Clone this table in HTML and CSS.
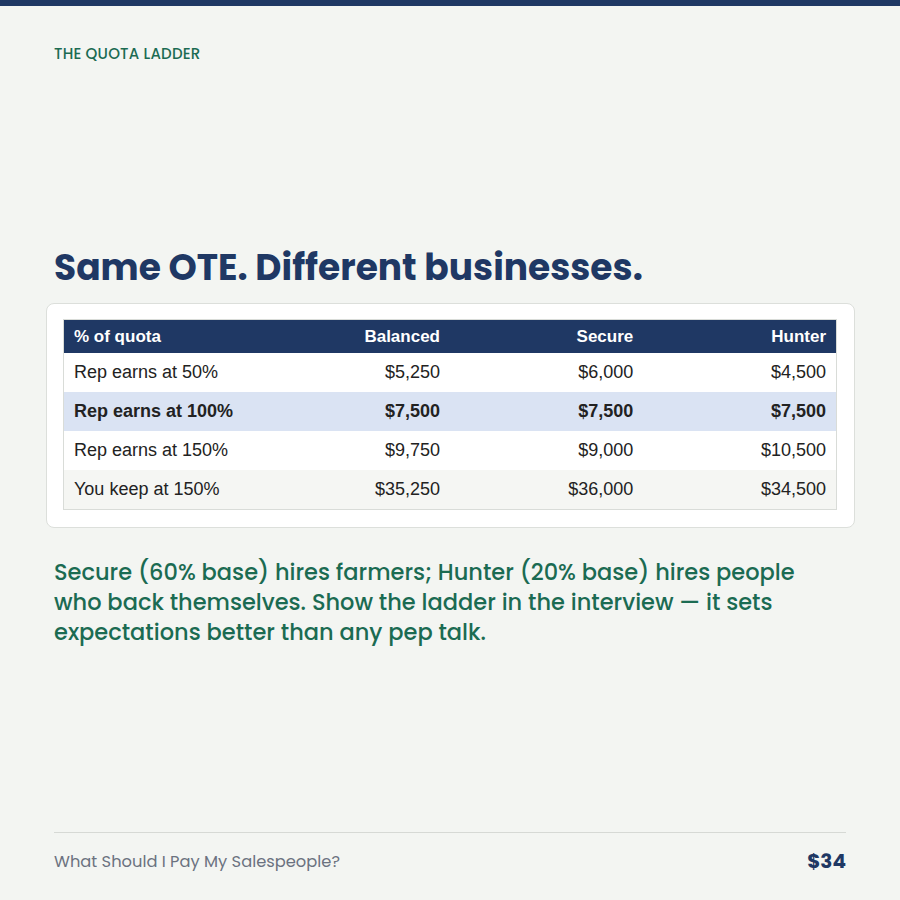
FILE: index.html
```html
<!DOCTYPE html>
<html lang="en">
<head>
    <meta charset="UTF-8">
    <title>The Quota Ladder</title>
    <link rel="stylesheet" href="styles.css">
</head>
<body>
    <div class="topbar"></div>
    <div class="page">
        <div class="eyebrow">The Quota Ladder</div>

        <div class="main">
            <h1>Same OTE. Different businesses.</h1>

            <div class="card">
                <table class="ladder">
                    <thead>
                        <tr>
                            <th>% of quota</th>
                            <th>Balanced</th>
                            <th>Secure</th>
                            <th>Hunter</th>
                        </tr>
                    </thead>
                    <tbody>
                        <tr>
                            <td>Rep earns at 50%</td>
                            <td>$5,250</td>
                            <td>$6,000</td>
                            <td>$4,500</td>
                        </tr>
                        <tr class="target">
                            <td>Rep earns at 100%</td>
                            <td>$7,500</td>
                            <td>$7,500</td>
                            <td>$7,500</td>
                        </tr>
                        <tr>
                            <td>Rep earns at 150%</td>
                            <td>$9,750</td>
                            <td>$9,000</td>
                            <td>$10,500</td>
                        </tr>
                        <tr class="keep">
                            <td>You keep at 150%</td>
                            <td>$35,250</td>
                            <td>$36,000</td>
                            <td>$34,500</td>
                        </tr>
                    </tbody>
                </table>
            </div>

            <p class="takeaway">Secure (60% base) hires farmers; Hunter (20% base) hires people who back themselves. Show the ladder in the interview — it sets expectations better than any pep talk.</p>
        </div>

        <div class="footer">
            <span class="book">What Should I Pay My Salespeople?</span>
            <span class="price">$34</span>
        </div>
    </div>
</body>
</html>
```

FILE: styles.css
```css
html, body {
    margin: 0;
    padding: 0;
}
body {
    background-color: #f3f5f2;
    font-family: "Poppins", "Lato", "Noto Sans", sans-serif;
    width: 900px;
    height: 900px;
    overflow: hidden;
}
.topbar {
    height: 6px;
    background-color: #1f3864;
}
.page {
    box-sizing: border-box;
    height: 894px;
    padding: 38px 54px 0 54px;
    display: flex;
    flex-direction: column;
}
.eyebrow {
    color: #1b6b52;
    font-size: 15px;
    font-weight: 500;
    letter-spacing: 0.2px;
    text-transform: uppercase;
    line-height: 20px;
}
.main {
    flex: 1;
    display: flex;
    flex-direction: column;
    justify-content: center;
    padding-bottom: 3px;
}
h1 {
    margin: 0 0 13px 0;
    color: #1f3864;
    font-size: 36px;
    font-weight: 700;
    line-height: 44px;
}
.card {
    background-color: #fff;
    border: 1px solid #dcdfdb;
    border-radius: 8px;
    margin: 0 -9px 0 -8px;
    padding: 15px 17px 17px 16px;
}
.ladder {
    width: 100%;
    table-layout: fixed;
    border-collapse: collapse;
    border: 1px solid #d9dcd8;
    font-family: "Liberation Sans", Arial, sans-serif;
    font-size: 18px;
    color: #222;
}
.ladder th,
.ladder td {
    padding: 0 10px;
    text-align: right;
    white-space: nowrap;
}
.ladder th:first-child,
.ladder td:first-child {
    text-align: left;
}
.ladder th {
    background-color: #1f3864;
    color: #fff;
    font-size: 17px;
    font-weight: 700;
    height: 33px;
}
.ladder td {
    height: 39px;
}
.ladder tr.target td {
    background-color: #dae3f3;
    font-weight: 700;
}
.ladder tr.keep td {
    background-color: #f5f6f3;
}
.takeaway {
    margin: 29px 0 0 0;
    color: #1b6b52;
    font-size: 22.5px;
    line-height: 30px;
    font-weight: 500;
    max-width: 770px;
}
.footer {
    margin-bottom: 24px;
    border-top: 1px solid #d6d9d5;
    padding-top: 13px;
    display: flex;
    justify-content: space-between;
    align-items: center;
}
.book {
    color: #6b7280;
    font-size: 16.3px;
}
.price {
    color: #1f3864;
    font-size: 20px;
    font-weight: 700;
}
```
